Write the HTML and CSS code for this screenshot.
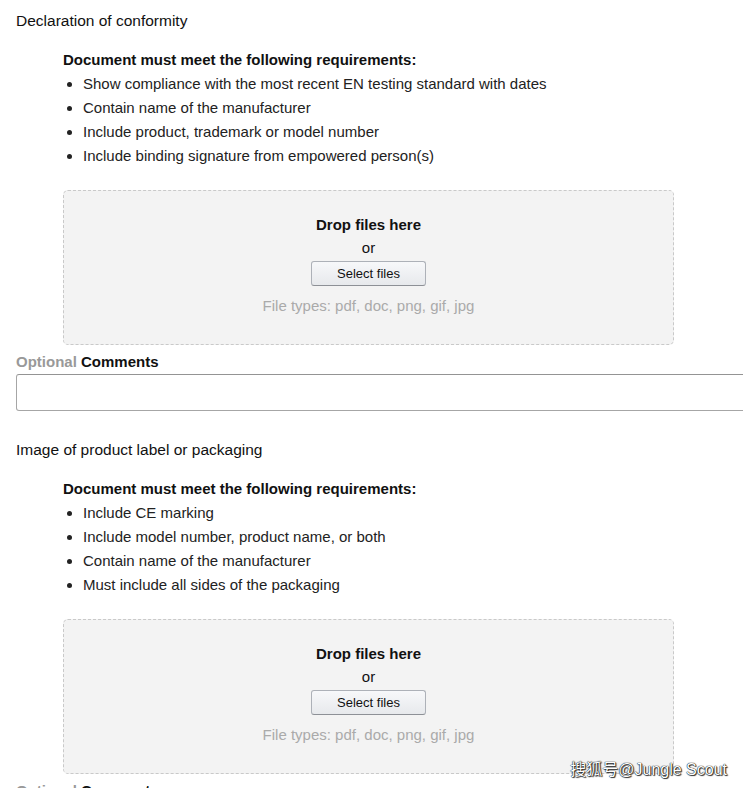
FILE: index.html
```html
<!DOCTYPE html>
<html lang="en">

<head>
    <meta charset="UTF-8">
    <meta name="viewport" content="width=device-width, initial-scale=1.0">
    <title>Compliance documents</title>
    <link rel="stylesheet" href="styles.css">
</head>

<body>
    <section class="doc-section">
        <h3 class="section-title">Declaration of conformity</h3>

        <div class="requirements">
            <p class="req-title">Document must meet the following requirements:</p>
            <ul class="req-list">
                <li>Show compliance with the most recent EN testing standard with dates</li>
                <li>Contain name of the manufacturer</li>
                <li>Include product, trademark or model number</li>
                <li>Include binding signature from empowered person(s)</li>
            </ul>

            <div class="dropzone">
                <div class="drop-title">Drop files here</div>
                <div class="drop-or">or</div>
                <button class="select-btn" type="button">Select files</button>
                <div class="file-types">File types: pdf, doc, png, gif, jpg</div>
            </div>
        </div>

        <label class="comment-label" for="comment1"><span class="optional">Optional</span> Comments</label>
        <textarea class="comment-box" id="comment1"></textarea>
    </section>

    <section class="doc-section">
        <h3 class="section-title">Image of product label or packaging</h3>

        <div class="requirements">
            <p class="req-title">Document must meet the following requirements:</p>
            <ul class="req-list">
                <li>Include CE marking</li>
                <li>Include model number, product name, or both</li>
                <li>Contain name of the manufacturer</li>
                <li>Must include all sides of the packaging</li>
            </ul>

            <div class="dropzone">
                <div class="drop-title">Drop files here</div>
                <div class="drop-or">or</div>
                <button class="select-btn" type="button">Select files</button>
                <div class="file-types">File types: pdf, doc, png, gif, jpg</div>
            </div>
        </div>

        <label class="comment-label" for="comment2"><span class="optional">Optional</span> Comments</label>
        <textarea class="comment-box" id="comment2"></textarea>
    </section>

    <div class="watermark">搜狐号@Jungle Scout</div>
</body>

</html>
```

FILE: styles.css
```css
html, body {
    height: 100%;
    overflow: hidden;
}

body {
    font-family: 'Liberation Sans', Arial, sans-serif;
    color: #111;
    background-color: #fff;
    margin: 0;
    padding: 0 0 0 16px;
}

.doc-section {
    display: flex;
    flex-direction: column;
}

.section-title {
    font-size: 15.5px;
    font-weight: normal;
    line-height: 20px;
    margin: 11px 0 0 0;
}

.doc-section + .doc-section .section-title {
    margin-top: 29px;
}

.requirements {
    margin-left: 47px;
    width: 611px;
}

.req-title {
    font-size: 15px;
    font-weight: bold;
    line-height: 24px;
    margin: 17px 0 0 0;
}

.req-list {
    margin: 0;
    padding-left: 20px;
    font-size: 15px;
    line-height: 24px;
    color: #222;
}

.dropzone {
    margin-top: 22px;
    height: 155px;
    box-sizing: border-box;
    padding-top: 23px;
    background-color: #f3f3f3;
    border: 1px dashed #c9c9c9;
    border-radius: 5px;
    display: flex;
    flex-direction: column;
    align-items: center;
}

.drop-title {
    font-size: 15px;
    font-weight: bold;
    line-height: 22px;
}

.drop-or {
    font-size: 15px;
    line-height: 24px;
}

.select-btn {
    margin-top: 1px;
    width: 115px;
    height: 25px;
    font-family: inherit;
    font-size: 13px;
    color: #111;
    background: linear-gradient(#f7f8fa, #e7e9ec);
    border: 1px solid #adb1b8;
    border-bottom-color: #8d9096;
    border-radius: 3px;
    padding: 0;
}

.file-types {
    margin-top: 10px;
    font-size: 15px;
    line-height: 20px;
    color: #aaa;
}

.comment-label {
    margin-top: 7px;
    font-size: 15px;
    font-weight: bold;
    line-height: 20px;
}

.optional {
    color: #999;
}

.comment-box {
    margin-top: 2px;
    width: 760px;
    height: 37px;
    box-sizing: border-box;
    border: 1px solid #a6a6a6;
    border-top-color: #949494;
    border-radius: 3px;
    resize: none;
}

.watermark {
    position: absolute;
    right: 16px;
    bottom: 8px;
    font-family: 'Liberation Sans', 'Noto Sans CJK SC', sans-serif;
    font-size: 16px;
    color: #fff;
    text-shadow: 0 0 1px #000, 0 0 1px #000, 1px 1px 1px #333;
}
```
